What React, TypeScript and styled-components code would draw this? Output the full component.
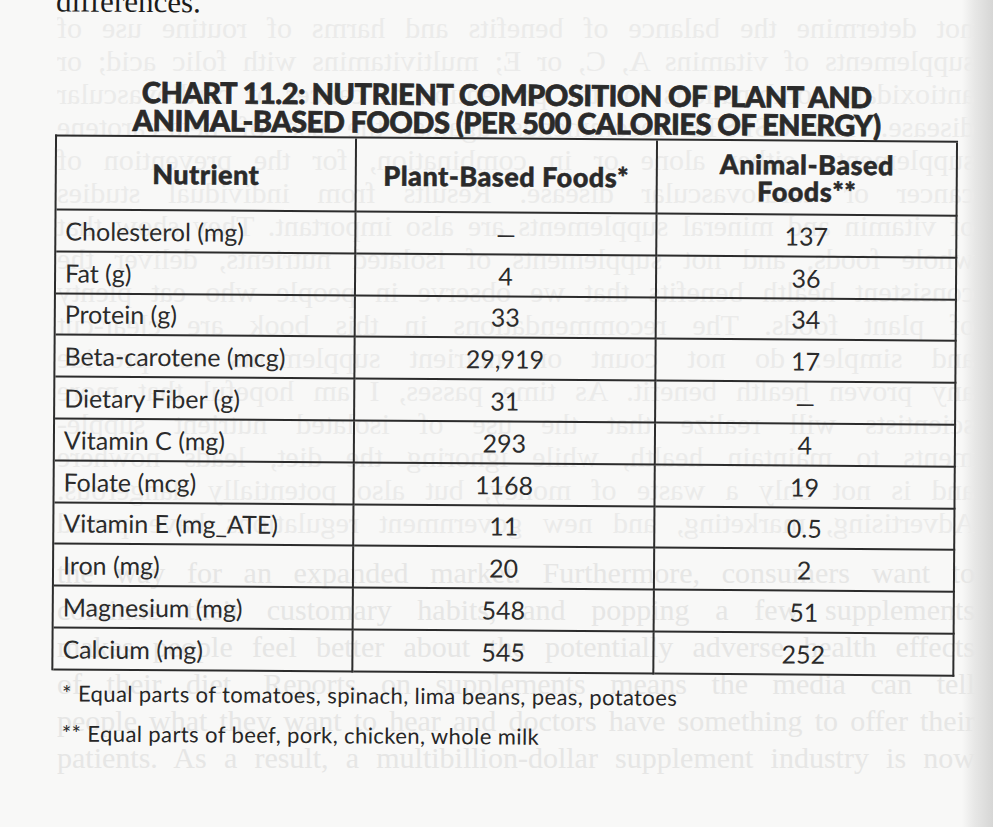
import React from 'react';
import styled, { createGlobalStyle } from 'styled-components';

const GlobalStyle = createGlobalStyle`
  html, body {
    margin: 0;
    padding: 0;
    background: #f8f8f7;
  }
`;

const Page = styled.div`
  width: 993px;
  height: 827px;
  overflow: hidden;
  display: grid;
  background: linear-gradient(90deg, #f8f8f7 0, #f8f8f7 962px, #e8e8e7 974px, #d6d6d5 993px);

  & > * {
    grid-area: 1 / 1;
  }
`;

/* faint text from the other side of the sheet showing through the paper */
const BleedLayer = styled.div`
  display: flex;
  flex-direction: column;
  padding-top: 11px;
`;

const BleedBlock = styled.div<{ $mirrored?: boolean; $lineHeight: number; $tone: string }>`
  width: 918px;
  margin-left: 57px;
  transform: ${(p) => (p.$mirrored ? 'scaleX(-1)' : 'none')};
  font-family: 'Liberation Serif', 'Times New Roman', serif;
  font-size: 30px;
  color: ${(p) => p.$tone};

  & > div {
    height: ${(p) => p.$lineHeight}px;
    line-height: ${(p) => p.$lineHeight}px;
    overflow: hidden;
    text-align: justify;
    text-align-last: justify;
  }
`;

const LowerBleed = styled(BleedBlock)`
  margin-top: 15px;
`;

const Content = styled.div`
  display: flex;
  flex-direction: column;
  width: 903px;
  padding-left: 56px;
  transform: rotate(0.4deg);
  transform-origin: 0 0;
  color: #262626;
`;

const CarryLine = styled.div`
  margin-top: -15px;
  height: 31px;
  font-family: 'Liberation Serif', 'Times New Roman', serif;
  font-size: 31px;
  line-height: 31px;
  color: #1c1c1c;
`;

const Title = styled.h2`
  margin: 61px 0 1px;
  font-family: Lato, 'Liberation Sans', sans-serif;
  font-weight: 900;
  font-size: 29px;
  line-height: 28px;
  letter-spacing: -0.5px;
  text-align: center;
  color: #2a2a2a;
  -webkit-text-stroke: 0.7px #2a2a2a;
`;

const Table = styled.div`
  display: grid;
  grid-template-columns: 300px 301px 300px;
  border-top: 2px solid #2c2c2c;
  border-left: 2px solid #2c2c2c;
  font-family: Lato, 'Liberation Sans', sans-serif;
`;

const Cell = styled.div<{ $head?: boolean; $align?: 'left' | 'center' }>`
  box-sizing: border-box;
  height: ${(p) => (p.$head ? '74px' : '41.8px')};
  border-right: 2px solid #2c2c2c;
  border-bottom: 2px solid #2c2c2c;
  display: flex;
  align-items: center;
  justify-content: ${(p) => (p.$align === 'left' ? 'flex-start' : 'center')};
  padding-left: ${(p) => (p.$align === 'left' ? '9px' : '0')};
  text-align: center;
  font-size: ${(p) => (p.$head ? '27px' : '25px')};
  font-weight: ${(p) => (p.$head ? 900 : 400)};
  letter-spacing: ${(p) => (p.$head ? '0.5px' : '0')};
  line-height: ${(p) => (p.$head ? '27px' : '30px')};
  color: ${(p) => (p.$head ? '#2a2a2a' : '#2b2b2b')};
  -webkit-text-stroke: ${(p) => (p.$head ? '0.5px #2a2a2a' : '0')};
  white-space: nowrap;
`;

const LowDash = styled.span`
  vertical-align: -9px;
`;

const Notes = styled.div`
  padding: 3px 0 0 11px;
  font-family: Lato, 'Liberation Sans', sans-serif;
  font-size: 22px;
  letter-spacing: 0.4px;
  line-height: 40px;
  color: #262626;
`;

const upperBleed = [
  'not determine the balance of benefits and harms of routine use of',
  'supplements of vitamins A, C, or E; multivitamins with folic acid; or',
  'antioxidant combinations for the prevention of cancer or cardiovascular',
  'disease. The USPSTF recommends against the use of beta-carotene',
  'supplements, either alone or in combination, for the prevention of',
  'cancer or cardiovascular disease. Results from individual studies',
  'of vitamin and mineral supplements are also important. They show that',
  'whole foods, and not supplements of isolated nutrients, deliver the',
  'consistent health benefits that we observe in people who eat plenty',
  'of plant foods. The recommendations in this book are clear-cut',
  'and simple: do not count on nutrient supplements to provide',
  'any proven health benefit. As time passes, I am hopeful that more',
  'scientists will realize that the use of isolated nutrient supple-',
  'ments to maintain health, while ignoring the diet, leads nowhere',
  'and is not only a waste of money, but also potentially dangerous.',
  'Advertising, marketing, and new government regulations have paved',
];

const lowerBleed = [
  'the way for an expanded market. Furthermore, consumers want to',
  'continue their customary habits, and popping a few supplements',
  'makes people feel better about the potentially adverse health effects',
  'of their diet. Reports on supplements means the media can tell',
  'people what they want to hear and doctors have something to offer their',
  'patients. As a result, a multibillion-dollar supplement industry is now',
];

type Row = { name: string; plant: string; animal: string };

const rows: Row[] = [
  { name: 'Cholesterol (mg)', plant: '—', animal: '137' },
  { name: 'Fat (g)', plant: '4', animal: '36' },
  { name: 'Protein (g)', plant: '33', animal: '34' },
  { name: 'Beta-carotene (mcg)', plant: '29,919', animal: '17' },
  { name: 'Dietary Fiber (g)', plant: '31', animal: 'low-dash' },
  { name: 'Vitamin C (mg)', plant: '293', animal: '4' },
  { name: 'Folate (mcg)', plant: '1168', animal: '19' },
  { name: 'Vitamin E (mg_ATE)', plant: '11', animal: '0.5' },
  { name: 'Iron (mg)', plant: '20', animal: '2' },
  { name: 'Magnesium (mg)', plant: '548', animal: '51' },
  { name: 'Calcium (mg)', plant: '545', animal: '252' },
];

const renderValue = (value: string) =>
  value === 'low-dash' ? <LowDash>—</LowDash> : value;

const App: React.FC = () => {
  return (
    <Page>
      <GlobalStyle />
      <BleedLayer aria-hidden="true">
        <BleedBlock $mirrored $lineHeight={33} $tone="#ebebea">
          {upperBleed.map((line, i) => (
            <div key={i}>{line}</div>
          ))}
        </BleedBlock>
        <LowerBleed $lineHeight={37} $tone="#e6e6e5">
          {lowerBleed.map((line, i) => (
            <div key={i}>{line}</div>
          ))}
        </LowerBleed>
      </BleedLayer>

      <Content>
        <CarryLine>differences.</CarryLine>
        <Title>
          CHART 11.2: NUTRIENT COMPOSITION OF PLANT AND
          <br />
          ANIMAL-BASED FOODS (PER 500 CALORIES OF ENERGY)
        </Title>
        <Table>
          <Cell $head>Nutrient</Cell>
          <Cell $head>Plant-Based Foods*</Cell>
          <Cell $head>
            Animal-Based
            <br />
            Foods**
          </Cell>
          {rows.map((row) => (
            <React.Fragment key={row.name}>
              <Cell $align="left">{row.name}</Cell>
              <Cell>{renderValue(row.plant)}</Cell>
              <Cell>{renderValue(row.animal)}</Cell>
            </React.Fragment>
          ))}
        </Table>
        <Notes>
          <div>* Equal parts of tomatoes, spinach, lima beans, peas, potatoes</div>
          <div>** Equal parts of beef, pork, chicken, whole milk</div>
        </Notes>
      </Content>
    </Page>
  );
};

export default App;
